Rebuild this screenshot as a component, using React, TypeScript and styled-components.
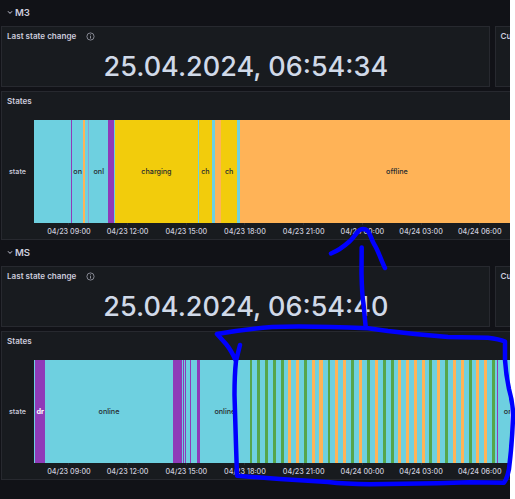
import React from 'react'
import styled, { createGlobalStyle } from 'styled-components'

type Segment = { from: number, state: string, label?: string }

const colors: Record<string, string> = {
  online: '#6ed0e0',
  offline: '#ffb357',
  charging: '#f2cc0c',
  driving: '#8f3bb8',
  updating: '#56a64b',
  asleep: '#8e9bd3',
}

const CHART_START = 34.4

const m3States: Segment[] = [
  { from: 34.4, state: 'online' },
  { from: 71, state: 'driving' },
  { from: 72, state: 'online', label: 'on' },
  { from: 83.3, state: 'offline' },
  { from: 85.3, state: 'online' },
  { from: 88, state: 'asleep' },
  { from: 89.5, state: 'online', label: 'onl' },
  { from: 108, state: 'driving' },
  { from: 114.3, state: 'online' },
  { from: 115, state: 'charging', label: 'charging' },
  { from: 198, state: 'online' },
  { from: 199, state: 'charging', label: 'ch' },
  { from: 212, state: 'online' },
  { from: 215, state: 'offline' },
  { from: 221.5, state: 'charging', label: 'ch' },
  { from: 237, state: 'online' },
  { from: 240.5, state: 'offline', label: 'offline' },
]

// short wake-ups: start, end, state
const wakeUps: [number, number, string][] = [
  [250, 252, 'updating'], [257, 260, 'updating'], [265, 268, 'updating'],
  [273, 275.7, 'updating'], [281, 283.7, 'updating'], [288, 291, 'offline'],
  [295.7, 299, 'offline'], [304, 307, 'updating'], [312, 315, 'offline'],
  [319.3, 323, 'offline'], [327.7, 330, 'updating'], [335, 338, 'offline'],
  [343, 346, 'offline'], [351, 354, 'updating'], [359, 362, 'offline'],
  [367, 370, 'updating'], [374.7, 377.7, 'offline'], [382.7, 385.7, 'updating'],
  [391, 393.7, 'updating'], [398, 401, 'offline'], [405.7, 409.3, 'offline'],
  [413.7, 416.7, 'offline'], [421.7, 425, 'offline'], [429.7, 432.7, 'updating'],
  [437.3, 440, 'offline'], [445.3, 448, 'updating'], [453, 456, 'offline'],
  [461, 464, 'offline'], [469, 472, 'updating'], [476, 479.3, 'offline'],
  [484.3, 487.3, 'offline'], [492.7, 495.7, 'updating'],
]

const msStates: Segment[] = [
  { from: 34.4, state: 'online' },
  { from: 35.4, state: 'driving', label: 'dr' },
  { from: 45, state: 'online', label: 'online' },
  { from: 173, state: 'driving' },
  { from: 182, state: 'online' },
  { from: 183.1, state: 'driving' },
  { from: 184, state: 'online' },
  { from: 185.1, state: 'driving' },
  { from: 186, state: 'online' },
  { from: 190, state: 'driving' },
  { from: 191, state: 'online' },
  { from: 197, state: 'driving' },
  { from: 199.8, state: 'online', label: 'online' },
  ...wakeUps.flatMap(([from, to, state]) => [{ from, state }, { from: to, state: 'online' }]),
  { from: 497, state: 'driving' },
  { from: 498, state: 'online', label: 'online' },
]

const times = [
  '04/23 09:00', '04/23 12:00', '04/23 15:00', '04/23 18:00',
  '04/23 21:00', '04/24 00:00', '04/24 03:00', '04/24 06:00',
]

function Timeline({ states, end }: { states: Segment[], end: number }) {
  return (
    <Chart>
      <ChartRow>
        <RowLabel>state</RowLabel>
        <Bars>
          {states.map((seg, i) => {
            const next = i + 1 < states.length ? states[i + 1].from : end
            return (
              <Bar key={i} $state={seg.state} style={{ width: next - seg.from }}>
                {seg.label}
              </Bar>
            )
          })}
        </Bars>
      </ChartRow>
      <Axis>
        {times.map(time => <Tick key={time}>{time}</Tick>)}
      </Axis>
    </Chart>
  )
}

type CarProps = { name: string, changed: string, states: Segment[], end: number }

function Car({ name, changed, states, end }: CarProps) {
  return (
    <Section>
      <SectionHead>
        <svg width='6' height='5' viewBox='0 0 6 5'>
          <path d='M1 1.3 L3 3.4 L5 1.3' fill='none' stroke='#ccccdc' strokeWidth='1' />
        </svg>
        <span>{name}</span>
      </SectionHead>
      <StatRow>
        <Panel>
          <PanelTitle>
            Last state change
            <svg width='9' height='9' viewBox='0 0 9 9'>
              <circle cx='4.5' cy='4.5' r='3.6' fill='none' stroke='#a0a1ad' strokeWidth='0.8' />
              <path d='M4.5 4.1 V6.5 M4.5 2.4 V3.3' stroke='#a0a1ad' strokeWidth='0.9' />
            </svg>
          </PanelTitle>
          <Value>{changed}</Value>
        </Panel>
        <Panel>
          <PanelTitle>Cu</PanelTitle>
        </Panel>
      </StatRow>
      <StatesPanel>
        <PanelTitle>States</PanelTitle>
        <Timeline states={states} end={end} />
      </StatesPanel>
    </Section>
  )
}

export default function App() {
  return (
    <>
      <GlobalStyle />
      <Page>
        <Dashboard>
          <Car name='M3' changed='25.04.2024, 06:54:34' states={m3States} end={553.5} />
          <Car name='MS' changed='25.04.2024, 06:54:40' states={msStates} end={531} />
        </Dashboard>
        <Marker width='515' height='499' viewBox='0 0 515 499'>
          <path d='M331 253.5 Q340 250 350 241 C356 235 358 229 363 229 C370 229 370 237 374 244 C378 250 381 260 385 268' />
          <path d='M361.7 247.5 L361.5 273 Q362 296 363.5 304 L365.7 327' />
          <path d='M240 345 L236 361 Q231 350 226 344 L217 334 Q245 329 272 327 Q305 325.5 368 328.3 L388 331 L415 334 L448 337 L488 337.7 Q499 339 505 341.5 L505 360 Q506 375 509 389 Q513 403 513 415 Q512.5 440 509 469 Q507 479 504 482.7 L470 482.3 L437 483.3 L370 484.3 Q345 484 328 482 L280 479 L237 475.7 L236 445 L234.5 395 Q234.5 375 236 361' />
        </Marker>
      </Page>
    </>
  )
}

const GlobalStyle = createGlobalStyle`
  body {
    margin: 0;
    background: #fff;
    overflow: hidden;
  }
`

const Page = styled.div`
  position: relative;
  width: 515px;
  height: 499px;
  font-family: Inter, sans-serif;
  color: #ccccdc;
`

const Dashboard = styled.div`
  box-sizing: border-box;
  width: 510px;
  height: 499px;
  overflow: hidden;
  background: #111217;
`

const Section = styled.div`
  height: 240.4px;
`

const SectionHead = styled.div`
  display: flex;
  align-items: center;
  box-sizing: border-box;
  gap: 2px;
  height: 26px;
  padding: 0 0 1px 7px;
  font-size: 9.6px;
  font-weight: 600;
`

const StatRow = styled.div`
  display: grid;
  grid-template-columns: 489px 200px;
  grid-template-rows: 61px;
  gap: 4.5px;
  margin-left: 1.4px;
`

const Panel = styled.div`
  box-sizing: border-box;
  background: #181b1f;
  border: 1px solid #27292f;
`

const StatesPanel = styled(Panel)`
  width: 700px;
  height: 149px;
  margin: 4px 0 0 1.4px;
`

const PanelTitle = styled.div`
  display: flex;
  align-items: center;
  gap: 9.5px;
  height: 18px;
  padding-left: 4.6px;
  font-size: 8.1px;
  font-weight: 600;
`

const Value = styled.div`
  height: 41px;
  text-align: center;
  font-size: 27px;
  font-weight: 500;
  line-height: 44px;
  white-space: nowrap;
  color: #d0d9e8;
`

const Chart = styled.div`
  width: 507.6px;
  padding-top: 9.5px;
`

const ChartRow = styled.div`
  display: flex;
  height: 103px;
`

const RowLabel = styled.div`
  flex: none;
  display: flex;
  align-items: center;
  box-sizing: border-box;
  width: ${CHART_START - 2.4}px;
  padding-left: 6.6px;
  font-size: 7.2px;
  font-weight: 500;
`

const Bars = styled.div`
  display: flex;
  flex: 1;
  overflow: hidden;
`

const Bar = styled.div<{ $state: string }>`
  flex: none;
  display: flex;
  align-items: center;
  justify-content: center;
  background: ${p => colors[p.$state]};
  color: ${p => p.$state === 'driving' ? '#fff' : '#24292e'};
  font-size: 7.2px;
  font-weight: ${p => p.$state === 'driving' ? 700 : 500};
`

const Axis = styled.div`
  display: flex;
  padding-left: 37.2px;
`

const Tick = styled.div`
  flex: none;
  width: 58.7px;
  text-align: center;
  font-size: 7.2px;
  font-weight: 500;
  line-height: 13px;

  &::before {
    content: '';
    display: block;
    width: 1px;
    height: 2px;
    margin: 0 auto;
    background: #2b2d33;
  }
`

const Marker = styled.svg`
  position: absolute;
  top: 0;
  left: 0;
  fill: none;
  stroke: #0000ff;
  stroke-width: 4.5;
  stroke-linecap: round;
  stroke-linejoin: round;
`
